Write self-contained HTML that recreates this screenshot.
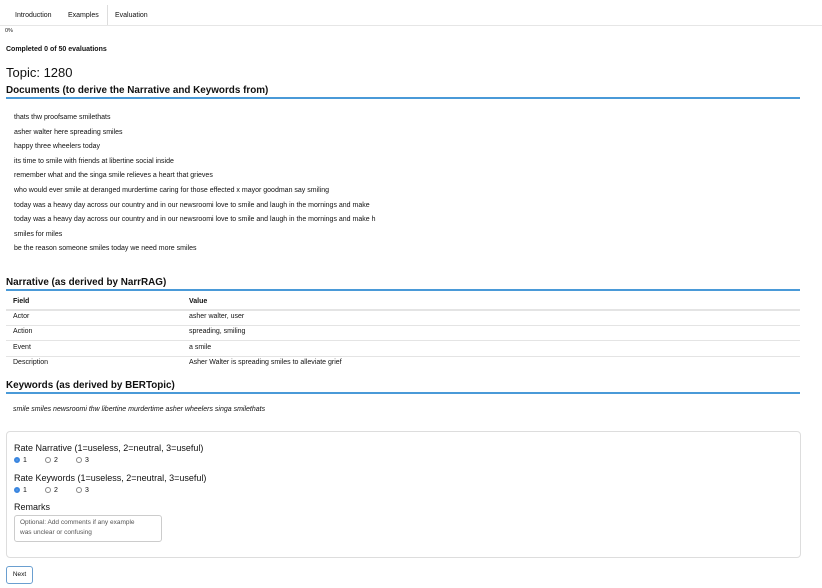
<!DOCTYPE html><html><head><style>
body{margin:0;width:822px;height:588px;position:relative;font-family:"Liberation Sans",sans-serif;color:#111;background:#fff;overflow:hidden}
.a{position:absolute;white-space:nowrap}
.s{font-size:7px}
.h{font-size:9.9px;font-weight:bold}
.bl{position:absolute;left:6px;width:794px;height:1.5px;background:#4a9ad8}
.rl{position:absolute;left:6px;width:794px;height:1px;background:#e4e4e4}
.r{display:inline-block;width:6px;height:6px;border:1px solid #888;border-radius:50%;vertical-align:-1px;margin-right:3px;box-sizing:border-box}
.r.on{border:2px solid #3a86e0;background:#fff;box-shadow:inset 0 0 0 1px #3a86e0}
.g{display:inline-block;width:31px}
</style></head><body>
<div class="a s" style="left:15px;top:12px">Introduction</div>
<div class="a s" style="left:68px;top:12px">Examples</div>
<div class="a s" style="left:115px;top:12px">Evaluation</div>
<div style="position:absolute;left:107px;top:5px;width:1px;height:21px;background:#ddd"></div>
<div style="position:absolute;left:0;top:25px;width:822px;height:1px;background:#e6e6e6"></div>
<div class="a" style="left:5px;top:28px;font-size:5.5px">0%</div>
<div class="a s" style="left:6px;top:46px;font-weight:bold">Completed 0 of 50 evaluations</div>
<div class="a" style="left:6px;top:65px;font-size:13px">Topic: 1280</div>
<div class="a h" style="left:6px;top:85px">Documents (to derive the Narrative and Keywords from)</div>
<div class="bl" style="top:97px"></div>
<div class="a s" style="left:14px;top:111px;line-height:14.6px">thats thw proofsame smilethats<br>asher walter here spreading smiles<br>happy three wheelers today<br>its time to smile with friends at libertine social inside<br>remember what and the singa smile relieves a heart that grieves<br>who would ever smile at deranged murdertime caring for those effected x mayor goodman say smiling<br>today was a heavy day across our country and in our newsroomi love to smile and laugh in the mornings and make<br>today was a heavy day across our country and in our newsroomi love to smile and laugh in the mornings and make h<br>smiles for miles<br>be the reason someone smiles today we need more smiles</div>
<div class="a h" style="left:6px;top:277px">Narrative (as derived by NarrRAG)</div>
<div class="bl" style="top:289px"></div>
<div class="a s" style="left:13px;top:298px;font-weight:bold">Field</div><div class="a s" style="left:189px;top:298px;font-weight:bold">Value</div>
<div class="rl" style="top:309px;height:1.5px"></div>
<div class="a s" style="left:13px;top:313px">Actor</div><div class="a s" style="left:189px;top:313px">asher walter, user</div>
<div class="rl" style="top:325px"></div>
<div class="a s" style="left:13px;top:328px">Action</div><div class="a s" style="left:189px;top:328px">spreading, smiling</div>
<div class="rl" style="top:340px"></div>
<div class="a s" style="left:13px;top:344px">Event</div><div class="a s" style="left:189px;top:344px">a smile</div>
<div class="rl" style="top:356px"></div>
<div class="a s" style="left:13px;top:359px">Description</div><div class="a s" style="left:189px;top:359px">Asher Walter is spreading smiles to alleviate grief</div>
<div class="a h" style="left:6px;top:380px">Keywords (as derived by BERTopic)</div>
<div class="bl" style="top:392px"></div>
<div class="a s" style="left:13px;top:406px;font-style:italic">smile smiles newsroomi thw libertine murdertime asher wheelers singa smilethats</div>
<div style="position:absolute;left:6px;top:431px;width:793px;height:125px;border:1px solid #ddd;border-radius:4px"></div>
<div class="a" style="left:14px;top:443px;font-size:9px">Rate Narrative (1=useless, 2=neutral, 3=useful)</div>
<div class="a s" style="left:14px;top:457px"><span class="g"><span class="r on"></span>1</span><span class="g"><span class="r"></span>2</span><span class="g"><span class="r"></span>3</span></div>
<div class="a" style="left:14px;top:473px;font-size:9px">Rate Keywords (1=useless, 2=neutral, 3=useful)</div>
<div class="a s" style="left:14px;top:487px"><span class="g"><span class="r on"></span>1</span><span class="g"><span class="r"></span>2</span><span class="g"><span class="r"></span>3</span></div>
<div class="a" style="left:14px;top:502px;font-size:9px">Remarks</div>
<div style="position:absolute;left:14px;top:515px;width:148px;height:27px;border:1px solid #ccc;border-radius:3px;box-sizing:border-box"></div>
<div class="a" style="left:20px;top:518px;font-size:6.5px;color:#555;line-height:10px">Optional: Add comments if any example<br>was unclear or confusing</div>
<div style="position:absolute;left:6px;top:566px;width:27px;height:18px;border:1px solid #6a9fd0;border-radius:3px;box-sizing:border-box;font-size:6.5px;text-align:center;line-height:16px">Next</div>
</body></html>
